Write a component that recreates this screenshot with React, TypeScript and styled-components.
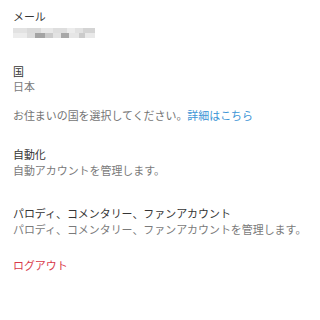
import React from 'react'
import styled, { createGlobalStyle } from 'styled-components'

const GlobalStyle = createGlobalStyle`
  body {
    margin: 0;
    background: #ffffff;
    font-family: "Noto Sans CJK JP", "Noto Sans", sans-serif;
  }
`

const Page = styled.div`
  display: flex;
  flex-direction: column;
  padding: 9px 13px 0 13px;
  font-size: 10.95px;
  line-height: 15.5px;
`

const Field = styled.div<{ $gap: number }>`
  display: flex;
  flex-direction: column;
  margin-bottom: ${(p) => p.$gap}px;
`

const Label = styled.div`
  color: #353535;
`

const Value = styled.div`
  color: #7a7a7a;
`

const Hint = styled.div`
  color: #747474;
  margin-top: 13px;
`

const Link = styled.a`
  color: #3d95d6;
  text-decoration: none;
`

const Logout = styled.div`
  color: #d8394a;
`

const blocks: [number, number, number, number, string][] = [
  [0, 0, 14, 5, '#e2e2e2'],
  [14, 0, 14, 5, '#dadada'],
  [28, 0, 12, 5, '#e8e8e8'],
  [40, 0, 14, 5, '#dedede'],
  [54, 0, 8, 5, '#ececec'],
  [62, 0, 8, 5, '#e2e2e2'],
  [70, 0, 12, 5, '#d4d4d4'],
  [0, 5, 14, 5, '#ececec'],
  [14, 5, 8, 5, '#dcdcdc'],
  [22, 5, 10, 5, '#a4a4a4'],
  [32, 5, 8, 5, '#cacaca'],
  [40, 5, 8, 5, '#e2e2e2'],
  [48, 5, 8, 5, '#a8a8a8'],
  [56, 5, 10, 5, '#e6e6e6'],
  [66, 5, 6, 5, '#cbcbcb'],
  [72, 5, 10, 5, '#e9e9e9'],
]

const Blurred = () => (
  <svg width="82" height="10" viewBox="0 0 82 10" style={{ display: 'block', margin: '3px 0 2px' }}>
    {blocks.map(([x, y, w, h, c], i) => (
      <rect key={i} x={x} y={y} width={w} height={h} fill={c} />
    ))}
  </svg>
)

export default function App() {
  return (
    <>
      <GlobalStyle />
      <Page>
        <Field $gap={24}>
          <Label>メール</Label>
          <Blurred />
        </Field>
        <Field $gap={24}>
          <Label>国</Label>
          <Value>日本</Value>
          <Hint>
            お住まいの国を選択してください。<Link href="#">詳細はこちら</Link>
          </Hint>
        </Field>
        <Field $gap={28}>
          <Label>自動化</Label>
          <Value>自動アカウントを管理します。</Value>
        </Field>
        <Field $gap={21}>
          <Label>パロディ、コメンタリー、ファンアカウント</Label>
          <Value>パロディ、コメンタリー、ファンアカウントを管理します。</Value>
        </Field>
        <Logout>ログアウト</Logout>
      </Page>
    </>
  )
}
